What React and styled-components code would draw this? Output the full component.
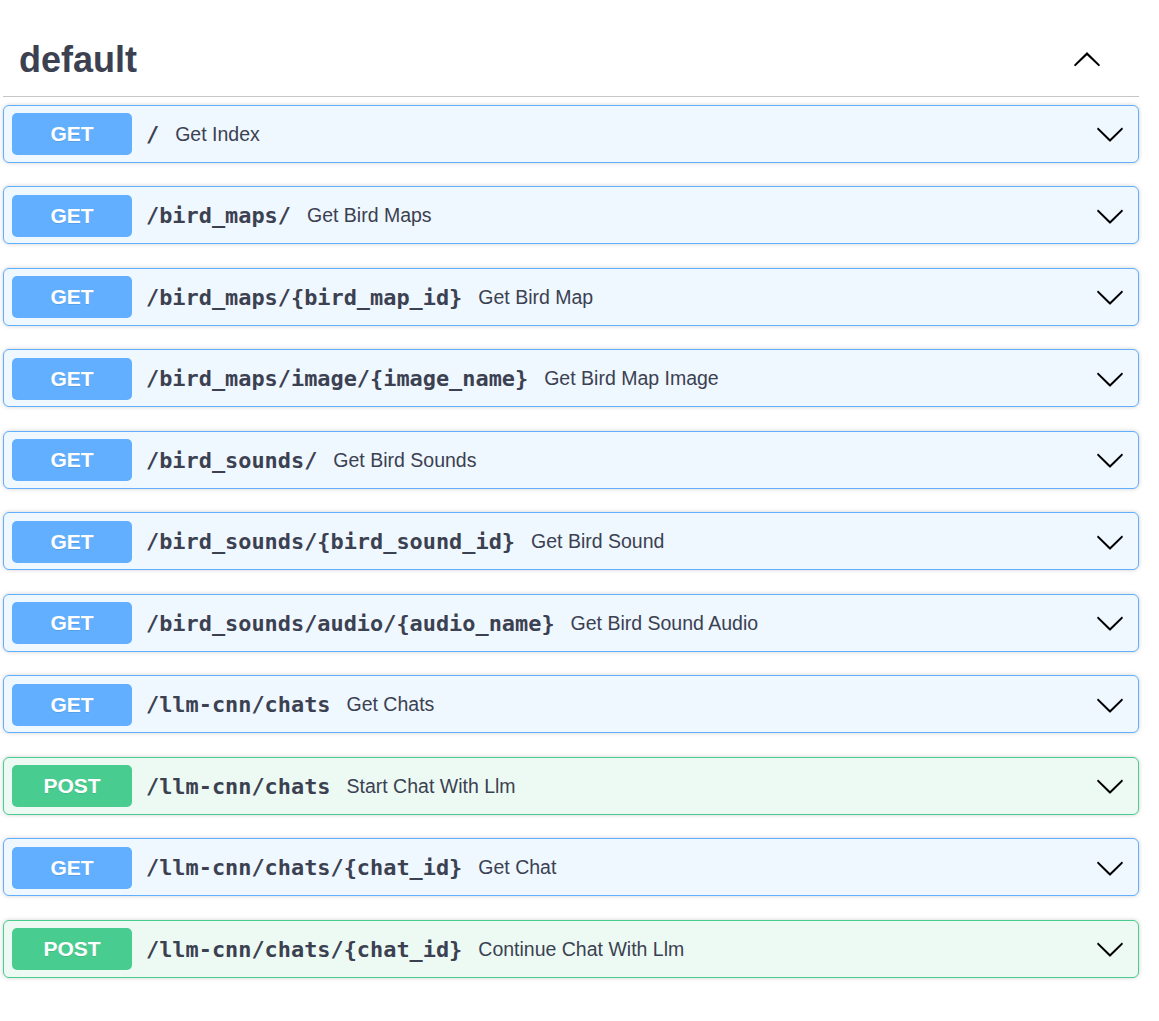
import React from 'react';
import styled, { createGlobalStyle, css } from 'styled-components';

const GlobalStyle = createGlobalStyle`
  body {
    margin: 0;
    background: #fff;
    font-family: "Liberation Sans", Arial, sans-serif;
    color: #3b4151;
  }
`;

const methods = {
  get: { color: '#61affe', bg: '#eff7ff' },
  post: { color: '#49cc90', bg: '#edfaf4' },
};

const operations = [
  { method: 'get', path: '/', summary: 'Get Index' },
  { method: 'get', path: '/bird_maps/', summary: 'Get Bird Maps' },
  { method: 'get', path: '/bird_maps/{bird_map_id}', summary: 'Get Bird Map' },
  { method: 'get', path: '/bird_maps/image/{image_name}', summary: 'Get Bird Map Image' },
  { method: 'get', path: '/bird_sounds/', summary: 'Get Bird Sounds' },
  { method: 'get', path: '/bird_sounds/{bird_sound_id}', summary: 'Get Bird Sound' },
  { method: 'get', path: '/bird_sounds/audio/{audio_name}', summary: 'Get Bird Sound Audio' },
  { method: 'get', path: '/llm-cnn/chats', summary: 'Get Chats' },
  { method: 'post', path: '/llm-cnn/chats', summary: 'Start Chat With Llm' },
  { method: 'get', path: '/llm-cnn/chats/{chat_id}', summary: 'Get Chat' },
  { method: 'post', path: '/llm-cnn/chats/{chat_id}', summary: 'Continue Chat With Llm' },
];

const ARROW =
  'M17.418 6.109c.272-.268.709-.268.979 0s.271.701 0 .969l-7.908 7.83c-.27.268-.707.268-.979 0l-7.908-7.83c-.27-.268-.27-.701 0-.969.271-.268.709-.268.979 0L10 13.25l7.418-7.141z';

function Arrow({ up }) {
  return (
    <ArrowSvg viewBox="0 0 20 20" $up={up}>
      <path d={ARROW} />
    </ArrowSvg>
  );
}

function Operation({ method, path, summary }) {
  return (
    <OpBlock $method={method}>
      <Summary>
        <Method $method={method}>{method.toUpperCase()}</Method>
        <Path>{path}</Path>
        <Description>{summary}</Description>
        <Arrow />
      </Summary>
    </OpBlock>
  );
}

export default function App() {
  return (
    <>
      <GlobalStyle />
      <Wrapper>
        <TagHeader>
          <TagTitle>default</TagTitle>
          <Arrow up />
        </TagHeader>
        {operations.map((op, i) => (
          <Operation key={i} {...op} />
        ))}
      </Wrapper>
    </>
  );
}

const Wrapper = styled.div`
  padding: 24px 20px 40px 3px;
`;

const TagHeader = styled.div`
  display: flex;
  align-items: center;
  padding: 15px 37px 15px 16px;
  margin-bottom: 7.5px;
  border-bottom: 1px solid rgba(59, 65, 81, 0.3);
`;

const TagTitle = styled.h3`
  flex: 1;
  margin: 0;
  font-size: 36px;
  font-weight: 700;
  color: #3b4151;
`;

const ArrowSvg = styled.svg`
  width: 30px;
  height: 30px;
  flex-shrink: 0;
  fill: #000;
  ${(p) =>
    p.$up &&
    css`
      transform: rotate(180deg);
    `}
`;

const OpBlock = styled.div`
  margin-bottom: 23.5px;
  border: 1px solid ${(p) => methods[p.$method].color};
  background: ${(p) => methods[p.$method].bg};
  border-radius: 6px;
  box-shadow: 0 0 4.5px rgba(0, 0, 0, 0.19);
`;

const Summary = styled.div`
  display: flex;
  align-items: center;
  padding: 7.5px 13px 6.5px 8px;
`;

const Method = styled.span`
  min-width: 120px;
  padding: 9px 0;
  line-height: 24px;
  border-radius: 5px;
  background: ${(p) => methods[p.$method].color};
  color: #fff;
  font-size: 21px;
  font-weight: 700;
  text-align: center;
  text-shadow: 0 1px 0 rgba(0, 0, 0, 0.1);
`;

const Path = styled.span`
  padding: 0 16px 0 14px;
  font-family: "DejaVu Sans Mono", "Liberation Mono", monospace;
  font-size: 21.9px;
  font-weight: 700;
  color: #3b4151;
`;

const Description = styled.span`
  flex: 1;
  font-size: 19.5px;
  color: #3b4151;
`;
